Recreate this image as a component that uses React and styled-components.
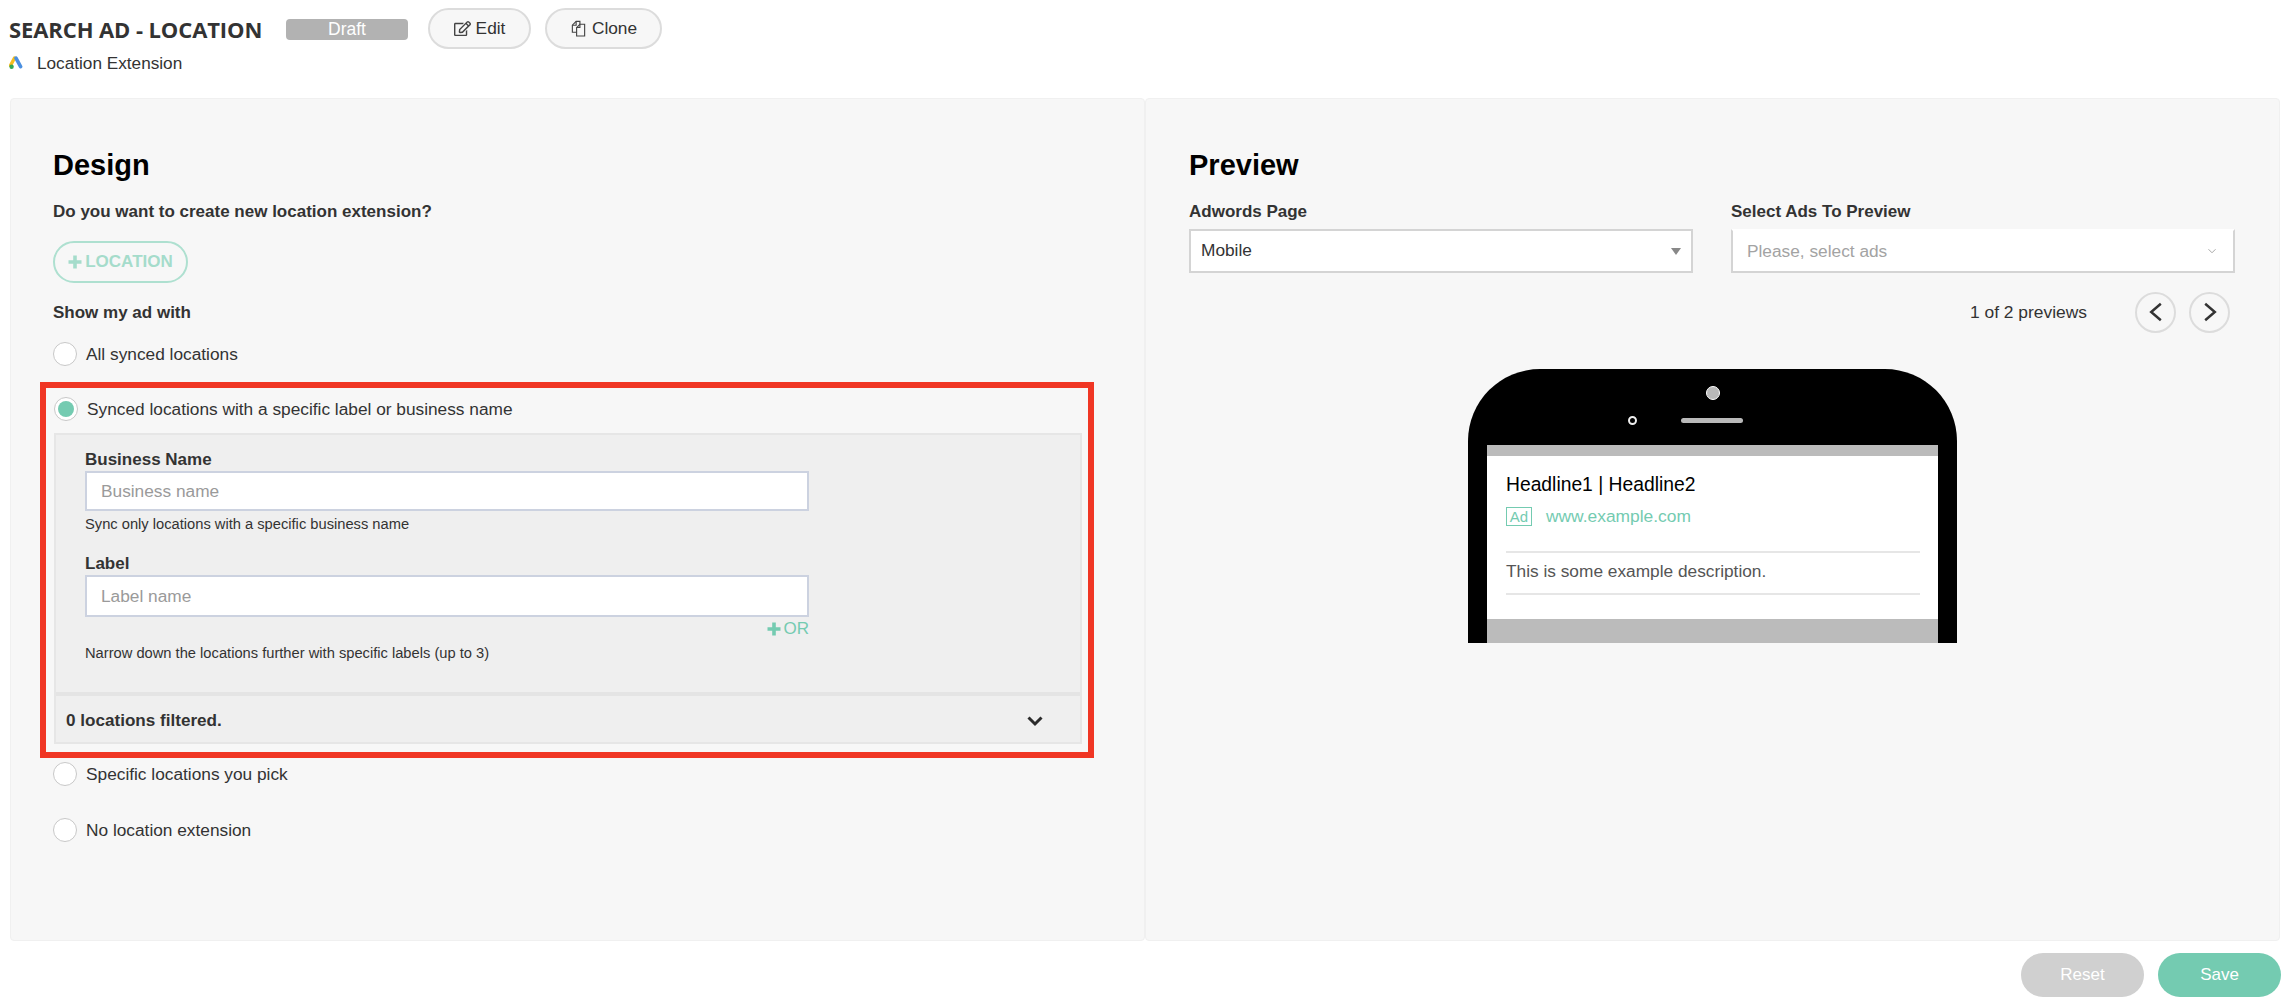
import React from "react";
import styled, { createGlobalStyle } from "styled-components";
import { FaRegEdit } from "react-icons/fa";

const GlobalStyle = createGlobalStyle`
  html, body {
    margin: 0;
    padding: 0;
    background: #fff;
    font-family: "Liberation Sans", Arial, sans-serif;
    color: #333;
  }
  * { box-sizing: border-box; }
`;

const Page = styled.div`
  width: 2290px;
  height: 1008px;
  overflow: hidden;
  background: #fff;
`;

const Header = styled.header`
  height: 98px;
  padding: 8px 0 0 9px;
`;

const TitleRow = styled.div`
  display: flex;
  align-items: center;
  height: 41px;
`;

const Title = styled.h1`
  margin: 0;
  width: 277px;
  font-family: "Open Sans", sans-serif;
  font-size: 22px;
  font-weight: 700;
  letter-spacing: -0.1px;
  color: #333;
  line-height: 38px;
`;

const Badge = styled.span`
  width: 122px;
  height: 21px;
  margin-top: 1px;
  border-radius: 4px;
  background: #b2b2b2;
  color: #fff;
  font-size: 17.5px;
  line-height: 21px;
  text-align: center;
`;

const PillButton = styled.button`
  display: flex;
  align-items: center;
  justify-content: center;
  gap: 5px;
  width: ${(p) => p.$width}px;
  height: 41px;
  margin-left: ${(p) => p.$gap}px;
  padding: 0;
  border: 2px solid #dcdcdc;
  border-radius: 21px;
  background: #f7f7f7;
  color: #333;
  font-family: inherit;
  font-size: 17.3px;
  svg { width: 17px; height: 17px; color: #444; }
`;

const SubRow = styled.div`
  display: flex;
  align-items: center;
  gap: 14px;
  margin-top: 4px;
  font-size: 17.2px;
  line-height: 20px;
  color: #333;
`;

const Panels = styled.main`
  display: flex;
  height: 843px;
  margin: 0 10px;
`;

const Panel = styled.section`
  flex: ${(p) => p.$grow};
  min-width: 0;
  background: #f7f7f7;
  border: 1px solid #f0f0f0;
  border-radius: 4px;
  padding: 50px 0 0 ${(p) => p.$left}px;
`;

const Heading = styled.h2`
  margin: 0;
  font-size: 29px;
  line-height: 32px;
  font-weight: 700;
  color: #000;
`;

const BoldLabel = styled.div`
  margin-top: ${(p) => p.$top || 0}px;
  font-size: 17px;
  font-weight: 700;
  line-height: 20px;
  color: #333;
`;

const OutlineButton = styled.button`
  display: flex;
  align-items: center;
  justify-content: center;
  gap: 3px;
  width: 135px;
  height: 42px;
  margin-top: 19px;
  padding: 0;
  border: 2px solid #aee0d0;
  border-radius: 21px;
  background: transparent;
  color: #a5dccb;
  font-family: inherit;
  font-size: 17px;
  font-weight: 700;
`;

const RadioRow = styled.label`
  display: flex;
  align-items: center;
  gap: 9px;
  height: 26px;
  margin-top: ${(p) => p.$top || 0}px;
  font-size: 17.3px;
  color: #333;
`;

const Radio = styled.span`
  display: flex;
  align-items: center;
  justify-content: center;
  flex: none;
  width: 24px;
  height: 24px;
  border: 1px solid #c8c8c8;
  border-radius: 50%;
  background: #fff;
  &::after {
    content: "";
    display: ${(p) => (p.$checked ? "block" : "none")};
    width: 16px;
    height: 16px;
    border-radius: 50%;
    background: #74cbb1;
  }
`;

const Highlight = styled.div`
  width: 1054px;
  height: 376px;
  margin: 15px 0 0 -13px;
  padding: 8px 6px 0 8px;
  border: 6px solid #f03624;
`;

const SubPanel = styled.div`
  width: 1028px;
  height: 311px;
  margin-top: 11px;
  border: 2px solid #e6e6e6;
  background: #efefef;
`;

const FilterForm = styled.div`
  height: 261px;
  padding: 15px 0 0 29px;
  border-bottom: 4px solid #e4e4e4;
`;

const TextInput = styled.input`
  display: block;
  width: 724px;
  height: ${(p) => p.$height}px;
  margin-top: 1px;
  padding: 0 14px;
  border: 2px solid #ccd2e0;
  border-radius: 0;
  background: #fff;
  font-family: inherit;
  font-size: 17.3px;
  outline: none;
  &::placeholder { color: #9a9a9a; opacity: 1; }
`;

const Help = styled.div`
  margin-top: ${(p) => p.$top}px;
  font-size: 14.7px;
  line-height: 16px;
  color: #333;
`;

const AddOr = styled.div`
  display: flex;
  align-items: center;
  justify-content: flex-end;
  gap: 3px;
  width: 724px;
  margin-top: 4px;
  font-size: 17px;
  line-height: 16px;
  color: #74cbb1;
`;

const FilterBar = styled.div`
  display: flex;
  align-items: center;
  justify-content: space-between;
  height: 46px;
  padding: 3px 37px 0 10px;
  font-size: 17.1px;
  font-weight: 700;
  color: #333;
`;

const Fields = styled.div`
  display: grid;
  grid-template-columns: 504px 504px;
  gap: 38px;
  margin-top: 21px;
`;

const SelectBox = styled.div`
  display: flex;
  align-items: center;
  justify-content: space-between;
  height: 44px;
  margin-top: 7px;
  padding: 0 ${(p) => p.$right}px ${(p) => (p.$open ? 0 : 2)}px ${(p) => p.$left}px;
  background: #fff;
  border: 2px solid #d4d4d4;
  border-top-color: ${(p) => (p.$open ? "#fff" : "#d4d4d4")};
  font-size: 17.3px;
  color: ${(p) => (p.$muted ? "#a3a3a3" : "#333")};
`;

const Caret = styled.span`
  width: 0;
  height: 0;
  margin-top: 2px;
  border-left: 5px solid transparent;
  border-right: 5px solid transparent;
  border-top: 7px solid #888;
`;

const Pager = styled.div`
  display: flex;
  align-items: center;
  justify-content: flex-end;
  height: 40px;
  margin: 19px 49px 0 0;
  font-size: 17.4px;
  color: #333;
`;

const PagerText = styled.span`
  margin-right: 48px;
`;

const RoundButton = styled.button`
  display: flex;
  align-items: center;
  justify-content: center;
  width: 41px;
  height: 41px;
  margin-left: ${(p) => p.$gap}px;
  padding: 0;
  border: 2px solid #dcdcdc;
  border-radius: 50%;
  background: #f7f7f7;
`;

const Phone = styled.div`
  width: 489px;
  height: 274px;
  margin: 37px 0 0 279px;
  padding: 0 19px;
  background: #000;
  border-radius: 72px 72px 0 0;
`;

const Notch = styled.div`
  height: 76px;
  padding-top: 17px;
`;

const Camera = styled.div`
  width: 14px;
  height: 14px;
  margin: 0 auto;
  border-radius: 50%;
  border: 1px solid #fff;
  background: #b9b9b9;
`;

const SpeakerRow = styled.div`
  display: flex;
  align-items: center;
  gap: 44px;
  margin: 16px 0 0 141px;
`;

const Sensor = styled.span`
  width: 9px;
  height: 9px;
  border: 2px solid #eee;
  border-radius: 50%;
`;

const Speaker = styled.span`
  width: 62px;
  height: 5px;
  border-radius: 3px;
  background: #b9b9b9;
`;

const GreyBand = styled.div`
  height: ${(p) => p.$height}px;
  background: #bbb;
`;

const Screen = styled.div`
  height: 163px;
  padding: 17px 18px 0 19px;
  background: #fff;
`;

const Headline = styled.div`
  font-size: 19.3px;
  line-height: 24px;
  color: #000;
`;

const AdRow = styled.div`
  display: flex;
  align-items: center;
  gap: 14px;
  margin-top: 9px;
  color: #74cbb1;
  font-size: 17.4px;
`;

const AdTag = styled.span`
  width: 26px;
  height: 19px;
  border: 1px solid #74cbb1;
  font-size: 15px;
  line-height: 17px;
  text-align: center;
`;

const Description = styled.div`
  margin-top: 24px;
  padding: 8px 0 12px;
  border-top: 2px solid #e6e6e6;
  border-bottom: 2px solid #e6e6e6;
  font-size: 17.3px;
  line-height: 20px;
  color: #555;
`;

const Footer = styled.footer`
  display: flex;
  justify-content: flex-end;
  gap: 14px;
  padding: 12px 9px 0 0;
`;

const ActionButton = styled.button`
  width: 123px;
  height: 44px;
  padding: 0;
  border: none;
  border-radius: 22px;
  background: ${(p) => p.$bg};
  color: #fff;
  font-family: inherit;
  font-size: 17px;
`;

const AdsLogo = () => (
  <svg width="14" height="14" viewBox="0 0 14 14" aria-hidden="true">
    <path d="M5.5 2 1.5 9.5" stroke="#f5bd1f" strokeWidth="3.4" strokeLinecap="round" />
    <path d="M7 2.2 11.6 10.6" stroke="#4a8fe0" strokeWidth="3.6" strokeLinecap="round" />
    <circle cx="2.6" cy="10.8" r="2.2" fill="#34a853" />
  </svg>
);

const Chevron = ({ d, size = 16, stroke = "#333", width = 1.8 }) => (
  <svg width={size} height={size} viewBox="0 0 16 16" fill="none" aria-hidden="true">
    <path d={d} stroke={stroke} strokeWidth={width} />
  </svg>
);

const PlusIcon = ({ size }) => (
  <svg width={size} height={size} viewBox="0 0 14 14" aria-hidden="true">
    <path d="M7 0.5v13M0.5 7h13" stroke="currentColor" strokeWidth="3.6" fill="none" />
  </svg>
);

// two stacked sheets, each with a folded corner
const FilesIcon = () => (
  <svg viewBox="0 0 16 18" fill="none" stroke="#444" strokeWidth="1.2" aria-hidden="true">
    <path d="M6 13H1.5V5.5L5.5 1.5H9.5V4.5" />
    <path d="M5.5 1.5V5.5H1.5" />
    <path d="M6 8 9.5 4.5H14.5V17H6Z" />
    <path d="M9.5 4.5V8H6" />
  </svg>
);

const App = () => {
  return (
    <Page>
      <GlobalStyle />
      <Header>
        <TitleRow>
          <Title>SEARCH AD - LOCATION</Title>
          <Badge>Draft</Badge>
          <PillButton $width={103} $gap={20}>
            <FaRegEdit /> Edit
          </PillButton>
          <PillButton $width={117} $gap={14}>
            <FilesIcon /> Clone
          </PillButton>
        </TitleRow>
        <SubRow>
          <AdsLogo />
          Location Extension
        </SubRow>
      </Header>

      <Panels>
        <Panel $grow="0 0 1135px" $left={42}>
          <Heading>Design</Heading>
          <BoldLabel $top={21}>Do you want to create new location extension?</BoldLabel>
          <OutlineButton>
            <PlusIcon size={14} /> LOCATION
          </OutlineButton>
          <BoldLabel $top={20}>Show my ad with</BoldLabel>
          <RadioRow $top={18}>
            <Radio />
            All synced locations
          </RadioRow>
          <Highlight>
            <RadioRow>
              <Radio $checked />
              Synced locations with a specific label or business name
            </RadioRow>
            <SubPanel>
              <FilterForm>
                <BoldLabel>Business Name</BoldLabel>
                <TextInput $height={40} placeholder="Business name" readOnly />
                <Help $top={5}>Sync only locations with a specific business name</Help>
                <BoldLabel $top={22}>Label</BoldLabel>
                <TextInput $height={42} placeholder="Label name" readOnly />
                <AddOr>
                  <PlusIcon size={14} /> OR
                </AddOr>
                <Help $top={8}>Narrow down the locations further with specific labels (up to 3)</Help>
              </FilterForm>
              <FilterBar>
                0 locations filtered.
                <Chevron d="M1.5 4.5 8 11l6.500-6.500" stroke="#2b2b2b" width={3} />
              </FilterBar>
            </SubPanel>
          </Highlight>
          <RadioRow $top={3}>
            <Radio />
            Specific locations you pick
          </RadioRow>
          <RadioRow $top={30}>
            <Radio />
            No location extension
          </RadioRow>
        </Panel>

        <Panel $grow="1" $left={43}>
          <Heading>Preview</Heading>
          <Fields>
            <div>
              <BoldLabel>Adwords Page</BoldLabel>
              <SelectBox $left={10} $right={10}>
                Mobile
                <Caret />
              </SelectBox>
            </div>
            <div>
              <BoldLabel>Select Ads To Preview</BoldLabel>
              <SelectBox $left={14} $right={14} $muted $open>
                Please, select ads
                <Chevron d="M4 6l4 4 4-4" size={14} stroke="#999" width={1} />
              </SelectBox>
            </div>
          </Fields>
          <Pager>
            <PagerText>1 of 2 previews</PagerText>
            <RoundButton $gap={0}>
              <Chevron d="M11.500 2 4.500 8l7 6" size={22} />
            </RoundButton>
            <RoundButton $gap={13}>
              <Chevron d="M4.500 2l7 6-7 6" size={22} />
            </RoundButton>
          </Pager>
          <Phone>
            <Notch>
              <Camera />
              <SpeakerRow>
                <Sensor />
                <Speaker />
              </SpeakerRow>
            </Notch>
            <GreyBand $height={11} />
            <Screen>
              <Headline>Headline1 | Headline2</Headline>
              <AdRow>
                <AdTag>Ad</AdTag>
                www.example.com
              </AdRow>
              <Description>This is some example description.</Description>
            </Screen>
            <GreyBand $height={24} />
          </Phone>
        </Panel>
      </Panels>

      <Footer>
        <ActionButton $bg="#d0d0d0">Reset</ActionButton>
        <ActionButton $bg="#74cbb1">Save</ActionButton>
      </Footer>
    </Page>
  );
};

export default App;
